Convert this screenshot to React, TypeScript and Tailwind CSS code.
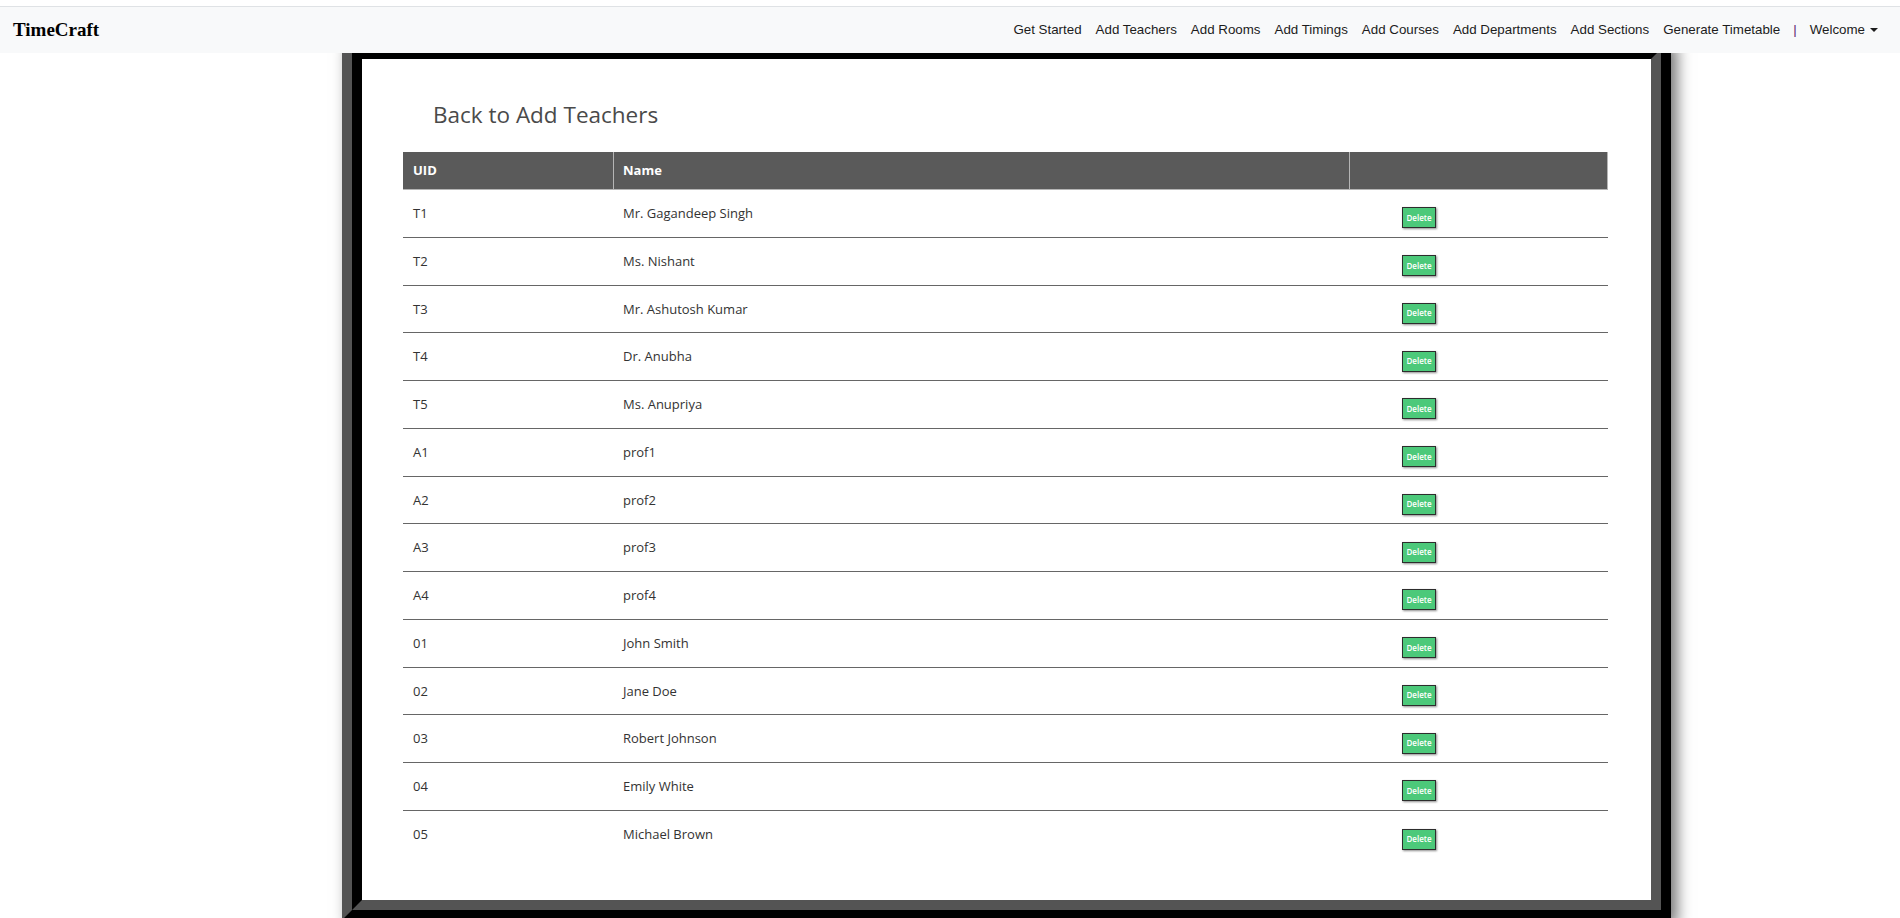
import React from 'react';

const navLinks = [
  'Get Started',
  'Add Teachers',
  'Add Rooms',
  'Add Timings',
  'Add Courses',
  'Add Departments',
  'Add Sections',
  'Generate Timetable',
];

const teachers = [
  { uid: 'T1', name: 'Mr. Gagandeep Singh' },
  { uid: 'T2', name: 'Ms. Nishant' },
  { uid: 'T3', name: 'Mr. Ashutosh Kumar' },
  { uid: 'T4', name: 'Dr. Anubha' },
  { uid: 'T5', name: 'Ms. Anupriya' },
  { uid: 'A1', name: 'prof1' },
  { uid: 'A2', name: 'prof2' },
  { uid: 'A3', name: 'prof3' },
  { uid: 'A4', name: 'prof4' },
  { uid: '01', name: 'John Smith' },
  { uid: '02', name: 'Jane Doe' },
  { uid: '03', name: 'Robert Johnson' },
  { uid: '04', name: 'Emily White' },
  { uid: '05', name: 'Michael Brown' },
];

export default function App() {
  return (
    <div className="h-[918px] overflow-hidden bg-white pt-[6px] font-['Open_Sans',sans-serif]">
      {/* Navbar */}
      <nav className="relative z-10 flex h-[47px] items-center justify-between border-t border-[#dfe2e5] bg-[#f8f9fa] pl-[13px] pr-[15px]">
        <div className="font-['Liberation_Serif',serif] text-[19px] font-bold text-black">TimeCraft</div>
        <ul className="flex items-center font-['Liberation_Sans',Arial,sans-serif] text-[13.33px] text-[#1c1c1c]">
          {navLinks.map(link => (
            <li key={link}>
              <a href="#" className="block px-[7px]">
                {link}
              </a>
            </li>
          ))}
          <li className="px-[6px] text-[#5e2470]">|</li>
          <li>
            <a href="#" className="flex items-center px-[7px]">
              Welcome
              <span className="ml-[5px] h-0 w-0 border-x-[4px] border-t-[4.5px] border-x-transparent border-t-[#1c1c1c]" />
            </a>
          </li>
        </ul>
      </nav>

      {/* Card */}
      <div className="-mt-[14px] ml-[342px] w-[1329px] border-[20px] border-black bg-white shadow-[6px_6px_14px_rgba(0,0,0,0.55)] [border-style:ridge]">
        <div className="px-[41px] pb-[41px] pt-[40px]">
          <h2 className="mb-[23px] h-[30px] pl-[30px] pt-[1px] text-[22.5px] leading-[30px] text-[#4a4a4a]">Back to Add Teachers</h2>

          <div className="w-[1205px] text-[13px] text-[#333]">
            <div className="grid h-[38px] grid-cols-[211px_736px_258px] bg-[#5a5a5a] font-bold text-white">
              <div className="flex items-center border-b border-r border-[#b5b5b5] pl-[10px] pt-[1px]">UID</div>
              <div className="flex items-center border-b border-r border-[#b5b5b5] pl-[9px] pt-[1px]">Name</div>
              <div className="border-b border-r border-[#b5b5b5]" />
            </div>

            {teachers.map((t, i) => (
              <div
                key={t.uid}
                className={`grid h-[47.75px] grid-cols-[211px_736px_258px] ${i < teachers.length - 1 ? 'border-b border-[#666]' : ''}`}
              >
                <div className="flex items-center pl-[10px] pt-[1px]">{t.uid}</div>
                <div className="flex items-center pl-[9px] pt-[1px]">{t.name}</div>
                <div className="flex items-center pl-[52px]">
                  <button className="mt-[9px] h-[21px] w-[34px] border border-[#2d2d2d] bg-[#4cc97a] text-[8px] font-semibold text-white shadow-[1px_1px_2px_rgba(0,0,0,0.45)]">
                    Delete
                  </button>
                </div>
              </div>
            ))}
          </div>
        </div>
      </div>
    </div>
  );
}
